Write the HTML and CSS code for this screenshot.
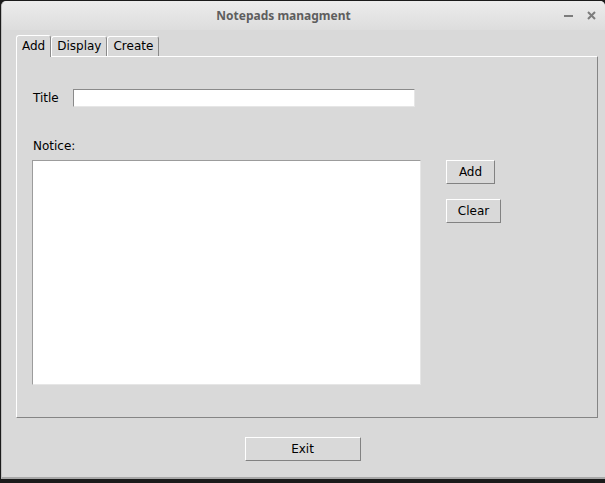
FILE: index.html
```html
<!DOCTYPE html>
<html>
<head>
<meta charset="utf-8">
<link rel="stylesheet" href="styles.css">
</head>
<body>
<div class="window">
  <div class="titlebar">
    <span class="title">Notepads managment</span>
    <div class="controls">
      <span class="min"></span>
      <svg class="close" width="9" height="9" viewBox="0 0 9 9"><path d="M1 1L8 8M8 1L1 8" stroke="#7c7c7c" stroke-width="2" fill="none"/></svg>
    </div>
  </div>
  <div class="client">
    <div class="tabs">
      <div class="tab active">Add</div>
      <div class="tab">Display</div>
      <div class="tab">Create</div>
    </div>
    <div class="page">
      <div class="row-title">
        <span class="lbl lbl-title">Title</span>
        <div class="entry"></div>
      </div>
      <div class="lbl notice">Notice:</div>
      <div class="row-notice">
        <div class="textarea"></div>
        <div class="btns">
          <div class="btn btn-add">Add</div>
          <div class="btn btn-clear">Clear</div>
        </div>
      </div>
    </div>
  </div>
  <div class="footer">
    <div class="btn btn-exit">Exit</div>
  </div>
</div>
</body>
</html>
```

FILE: styles.css
```css
html, body {
  margin: 0;
  padding: 0;
  background: #1b1b1b;
  width: 605px;
  height: 483px;
  overflow: hidden;
}
.window {
  margin: 1px 0 0 1px;
  width: 604px;
  height: 478px;
  box-sizing: border-box;
  background: #d9d9d9;
  border-radius: 5px 5px 0 0;
  border-left: 1px solid #bdbdbd;
  border-bottom: 2px solid #a8a8a8;
  font-family: "DejaVu Sans", sans-serif;
  font-size: 12px;
  color: #000;
}
.titlebar {
  height: 29px;
  display: flex;
  align-items: center;
  background: linear-gradient(#ececec, #dddddd);
  border-radius: 5px 5px 0 0;
}
.title {
  flex: 1;
  text-align: center;
  padding-left: 2px;
  font-family: "Noto Sans", sans-serif;
  font-weight: bold;
  font-size: 12px;
  color: #5e5e5e;
}
.controls {
  width: 42px;
  display: flex;
  align-items: center;
}
.min {
  width: 9px;
  height: 2px;
  background: #7c7c7c;
  margin-left: 1px;
}
.close {
  margin-left: 14px;
}
.client {
  padding: 5px 0 0 14px;
}
.tabs {
  display: flex;
  align-items: flex-end;
  height: 21px;
}
.tab {
  height: 20px;
  box-sizing: border-box;
  border: 1px solid #ffffff;
  border-right-color: #8a8a8a;
  border-bottom: none;
  border-radius: 3px 3px 0 0;
  padding: 0 5px;
  line-height: 19px;
  background: #d9d9d9;
}
.tab.active {
  height: 22px;
  margin-bottom: -1px;
  position: relative;
  z-index: 1;
  line-height: 20px;
}
.page {
  width: 582px;
  height: 362px;
  box-sizing: border-box;
  border: 1px solid #ffffff;
  border-right-color: #858585;
  border-bottom-color: #858585;
  padding: 32px 0 0 15px;
}
.row-title {
  display: flex;
  align-items: center;
  height: 18px;
}
.lbl {
  margin-left: 1px;
  line-height: 16px;
}
.lbl-title {
  width: 40px;
}
.entry {
  width: 342px;
  height: 18px;
  box-sizing: border-box;
  background: #fff;
  border: 1px solid #8a8a8a;
  border-right-color: #e6e6e6;
  border-bottom-color: #e6e6e6;
}
.notice {
  margin-top: 31px;
}
.row-notice {
  display: flex;
  margin-top: 6px;
}
.textarea {
  width: 389px;
  height: 225px;
  box-sizing: border-box;
  background: #fff;
  border: 1px solid #9c9c9c;
  border-right-color: #e6e6e6;
  border-bottom-color: #e6e6e6;
}
.btns {
  margin-left: 25px;
  display: flex;
  flex-direction: column;
  align-items: flex-start;
  gap: 15px;
}
.btn {
  height: 24px;
  box-sizing: border-box;
  border: 1px solid #ffffff;
  border-right-color: #828282;
  border-bottom-color: #828282;
  text-align: center;
  line-height: 22px;
}
.btn-add { width: 49px; }
.btn-clear { width: 55px; }
.footer {
  display: flex;
  justify-content: center;
  padding-top: 19px;
  padding-right: 2px;
}
.btn-exit {
  width: 116px;
}
```
